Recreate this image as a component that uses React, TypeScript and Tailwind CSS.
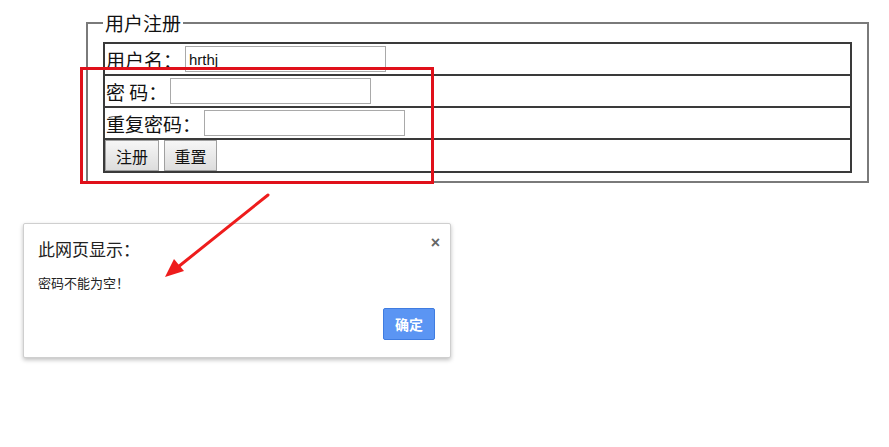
import React from "react";

const cjk = { fontFamily: '"Microsoft YaHei", "Noto Sans CJK SC", "Liberation Sans", sans-serif' };

const Row = ({ label, value }: { label: string; value?: string }) => (
  <tr>
    <td className="border-2 border-[#3a3a3a] h-[32px] px-0 py-0">
      <div className="flex items-center h-[30px] text-[19px] leading-none text-[#111]">
        <span className="pl-[1px]">{label}</span>
        <input
          defaultValue={value}
          className="ml-[3px] h-[26px] w-[201px] border border-[#a9a9a9] px-[3px] text-[15px] text-[#111] outline-none"
          style={{ fontFamily: '"Liberation Sans", sans-serif' }}
        />
      </div>
    </td>
  </tr>
);

const App: React.FC = () => {
  return (
    <div className="relative w-[889px] h-[447px] bg-white overflow-hidden" style={cjk}>
      {/* Registration form */}
      <fieldset className="ml-[86px] mt-[12px] w-[783px] border-2 border-[#7a7a7a] px-[15px] pt-[8px] pb-[8px]">
        <legend className="px-[2px] text-[19px] leading-[22px] text-[#111]">用户注册</legend>
        <table className="w-full border-collapse border-2 border-[#3a3a3a]">
          <tbody>
            <Row label="用户名：" value="hrthj" />
            <Row label="密 码：" />
            <Row label="重复密码：" />
            <tr>
              <td className="border-2 border-[#3a3a3a] h-[32px] p-0">
                <div className="flex items-center gap-[5px] h-[31px]">
                  <button className="h-[31px] w-[54px] border border-[#a0a0a0] bg-gradient-to-b from-[#f6f6f6] to-[#dddddd] text-[16px] text-[#111]">
                    注册
                  </button>
                  <button className="h-[31px] w-[53px] border border-[#a0a0a0] bg-gradient-to-b from-[#f6f6f6] to-[#dddddd] text-[16px] text-[#111]">
                    重置
                  </button>
                </div>
              </td>
            </tr>
          </tbody>
        </table>
      </fieldset>

      {/* Red highlight box */}
      <div className="absolute left-[80px] top-[67px] w-[354px] h-[117px] border-[3px] border-[#e0101a]" />

      {/* Alert dialog */}
      <div className="absolute left-[23px] top-[223px] w-[428px] h-[135px] bg-white border border-[#cfcfcf] rounded-[2px] shadow-[0_2px_4px_rgba(0,0,0,0.25)]">
        <div className="flex justify-between pl-[14px] pr-[10px] pt-[13px]">
          <div className="text-[17px] leading-[24px] text-[#222]">此网页显示：</div>
          <span className="text-[#666] text-[16px] font-bold leading-none mt-[-2px]" style={{ fontFamily: '"Liberation Sans", sans-serif' }}>
            ×
          </span>
        </div>
        <div className="pl-[14px] mt-[13px] text-[13px] leading-[18px] text-[#222]">密码不能为空！</div>
        <div className="flex justify-end pr-[15px] mt-[16px]">
          <button className="h-[32px] w-[52px] bg-[#5b95f3] border border-[#3f7ce0] rounded-[2px] text-white text-[14px] font-bold">
            确定
          </button>
        </div>
      </div>

      {/* Arrow */}
      <svg className="absolute left-0 top-0 pointer-events-none" width="889" height="447">
        <line x1="268" y1="195" x2="178" y2="267" stroke="#ee1c1c" strokeWidth="3" strokeLinecap="round" />
        <polygon points="165,277 174,259 184,271" fill="#ee1c1c" />
      </svg>
    </div>
  );
};

export default App;
